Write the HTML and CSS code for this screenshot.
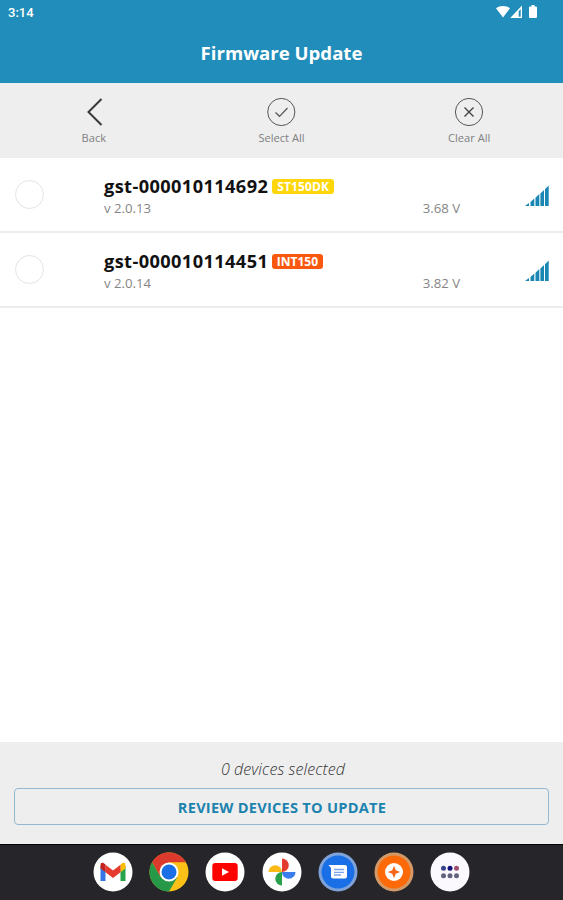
FILE: index.html
```
<!DOCTYPE html>
<html lang="en">
<head>
    <meta charset="UTF-8">
    <meta name="viewport" content="width=device-width, initial-scale=1.0">
    <title>Firmware Update</title>
    <link rel="stylesheet" href="styles.css">
</head>
<body>
    <header>
        <div class="status-bar">
            <span>3:14</span>
            <svg width="42" height="14" viewBox="0 0 42 14" fill="#fff">
                <path d="M0 3.200C4 .1 10 .1 14 3.200L7 12.500z"/>
                <path fill-rule="evenodd" d="M26 .5V13H14.200zM22.700 6.200V11.800H24.700V4z"/>
                <path d="M35.500 0h3v1.400h1.500q1 0 1 1V12q0 1-1 1h-6q-1 0-1-1V2.400q0-1 1-1h1.500z"/>
            </svg>
        </div>
        <h1>Firmware Update</h1>
    </header>

    <nav class="toolbar">
        <div class="tool">
            <svg width="30" height="30" viewBox="0 0 30 30" fill="none" stroke="#383838" stroke-width="2">
                <path d="M22.500 2L9.500 15l13 13"/>
            </svg>
            <span>Back</span>
        </div>
        <div class="tool">
            <svg width="30" height="30" viewBox="0 0 30 30" fill="none" stroke="#555">
                <circle cx="15.300" cy="15" r="13.600"/>
                <path d="M9.500 15.500l4 3.800 8-8.300" stroke-width="1.200"/>
            </svg>
            <span>Select All</span>
        </div>
        <div class="tool">
            <svg width="30" height="30" viewBox="0 0 30 30" fill="none" stroke="#555">
                <circle cx="15" cy="15" r="13.600"/>
                <path d="M10.500 10.500l9 9M19.500 10.500l-9 9" stroke="#444" stroke-width="1.400"/>
            </svg>
            <span>Clear All</span>
        </div>
    </nav>

    <main class="device-list">
        <div class="device">
            <div class="radio"></div>
            <div class="device-info">
                <div class="device-title"><h2>gst-000010114692</h2><span class="badge yellow">ST150DK</span></div>
                <div class="device-meta"><span>v 2.0.13</span><span class="voltage">3.68 V</span></div>
            </div>
            <svg class="signal" width="24" height="22" viewBox="0 0 24 22" fill="#1a86b3">
                <path d="M0 21l4-3v3zM5.500 17l3.800-3.400V21H5.500zM10.500 12.700l3.800-3.600V21h-3.800zM15.400 8.500l3.600-3.500v16h-3.600zM20 4.200L23.700 .5V21H20z"/>
            </svg>
        </div>
        <div class="device">
            <div class="radio"></div>
            <div class="device-info">
                <div class="device-title"><h2>gst-000010114451</h2><span class="badge orange">INT150</span></div>
                <div class="device-meta"><span>v 2.0.14</span><span class="voltage">3.82 V</span></div>
            </div>
            <svg class="signal" width="24" height="22" viewBox="0 0 24 22" fill="#1a86b3">
                <path d="M0 21l4-3v3zM5.500 17l3.800-3.400V21H5.500zM10.500 12.700l3.800-3.600V21h-3.800zM15.400 8.500l3.600-3.500v16h-3.600zM20 4.200L23.700 .5V21H20z"/>
            </svg>
        </div>
    </main>

    <section class="review">
        <p>0 devices selected</p>
        <button>REVIEW DEVICES TO UPDATE</button>
    </section>

    <footer class="dock">
        <!-- mail -->
        <svg viewBox="0 0 40 40">
            <circle cx="20" cy="20" r="19.500" fill="#fff"/>
            <path d="M7.500 14v15h5V17z" fill="#3578e5"/>
            <path d="M27.500 17v12h5V14z" fill="#27a44a"/>
            <path d="M27.500 12.500l2-1.500q3-1 3 2v3.500l-5 3.800z" fill="#fbbc04"/>
            <path d="M12.500 12.800l7.500 5.700 7.500-5.700v7.500L20 26l-7.500-5.700z" fill="#e53b2e"/>
            <path d="M7.500 13q0-3 3-2l2 1.500v7.800l-5-3.800z" fill="#c5221f"/>
        </svg>
        <!-- browser -->
        <svg viewBox="0 0 40 40">
            <circle cx="20" cy="20" r="19.500" fill="#fbc116"/>
            <path d="M3.100 10.250A19.500 19.500 0 0 1 36.900 10.250H20L11.550 24.900z" fill="#db3a2c"/>
            <path d="M3.100 10.250A19.500 19.500 0 0 0 20 39.500L28.450 24.900H11.550z" fill="#279847"/>
            <circle cx="20" cy="20" r="9.500" fill="#fff"/>
            <circle cx="20" cy="20" r="7.500" fill="#1a6fe6"/>
        </svg>
        <!-- video -->
        <svg viewBox="0 0 40 40">
            <circle cx="20" cy="20" r="19.500" fill="#fff"/>
            <rect x="7.300" y="11" width="25.400" height="18" rx="3" fill="#f00"/>
            <path d="M17 16.300v7.400l7-3.700z" fill="#fff"/>
        </svg>
        <!-- photos -->
        <svg viewBox="0 0 40 40">
            <circle cx="20" cy="20" r="19.500" fill="#fff"/>
            <path d="M20 20V6.500a6.750 6.750 0 0 1 0 13.500z" fill="#e33b2e"/>
            <path d="M20 20h13.500a6.750 6.750 0 0 1-13.500 0z" fill="#3b7ded"/>
            <path d="M20 20v13.500a6.750 6.750 0 0 1 0-13.500z" fill="#29a04a"/>
            <path d="M20 20H6.500a6.750 6.750 0 0 1 13.500 0z" fill="#fbb916"/>
        </svg>
        <!-- messages -->
        <svg viewBox="0 0 40 40">
            <circle cx="20" cy="20" r="19.500" fill="#7fa3d8"/>
            <circle cx="20" cy="20" r="16.500" fill="#1a6fe6"/>
            <path d="M10.500 13H27q2 0 2 2v9.500q0 2-2 2H15q-2 0-2-2V16z" fill="#fff"/>
            <path d="M16 17.500h10M16 20.300h10M16 23h7" stroke="#7aa5ea" stroke-width="1.300"/>
        </svg>
        <!-- tools -->
        <svg viewBox="0 0 40 40">
            <circle cx="20" cy="20" r="19.500" fill="#d39a67"/>
            <circle cx="20" cy="20" r="16.500" fill="#ff6a08"/>
            <circle cx="20" cy="20" r="9" fill="#fff"/>
            <path d="M20 13.800l1.800 4.400 4.400 1.800-4.400 1.800L20 26.200l-1.800-4.400-4.400-1.800 4.400-1.800z" fill="#f4661b"/>
        </svg>
        <!-- all apps -->
        <svg viewBox="0 0 40 40">
            <circle cx="20" cy="20" r="19.500" fill="#fbf9fe"/>
            <circle cx="13.500" cy="16.300" r="2.500" fill="#38428c"/>
            <circle cx="20" cy="16.300" r="2.500" fill="#11117a"/>
            <circle cx="26.500" cy="16.300" r="2.500" fill="#a05070"/>
            <circle cx="13.500" cy="23.800" r="2.500" fill="#62627c"/>
            <circle cx="20" cy="23.800" r="2.500" fill="#62627c"/>
            <circle cx="26.500" cy="23.800" r="2.500" fill="#62627c"/>
        </svg>
    </footer>
</body>
</html>
```
FILE: styles.css
```
* {
    box-sizing: border-box;
}

body {
    font-family: "Open Sans", sans-serif;
    background: #fff;
    margin: 0;
    height: 900px;
    display: flex;
    flex-direction: column;
}

header {
    background: #208dba;
    color: #fff;
    height: 83px;
}

.status-bar {
    display: flex;
    justify-content: space-between;
    padding: 5px 25px 0 8px;
    height: 38px;
    font: 500 13px/15px Roboto, sans-serif;
}

h1 {
    margin: 0;
    font-size: 18.6px;
    line-height: 30px;
    font-weight: 700;
    text-align: center;
}

.toolbar {
    display: grid;
    grid-template-columns: repeat(3, 1fr);
    height: 75px;
    padding-top: 14px;
    background: #eee;
}

.tool {
    display: flex;
    flex-direction: column;
    align-items: center;
    font-size: 11.1px;
    line-height: 15px;
    color: #808080;
}

.tool svg {
    margin-bottom: 3px;
}

.device-list {
    flex: 1;
}

.device {
    display: flex;
    height: 75px;
    padding: 0 14px 0 15px;
    border-bottom: 2px solid #ececec;
}

.radio {
    width: 29px;
    height: 29px;
    margin-top: 22px;
    border: 1px solid #e4e4e4;
    border-radius: 50%;
}

.device-info {
    flex: 1;
    margin-left: 60px;
    padding-top: 16px;
}

.device-title {
    display: flex;
    align-items: center;
    gap: 4px;
    height: 25px;
}

h2 {
    margin: 0;
    font-size: 18.2px;
    line-height: 25px;
    font-weight: 700;
    letter-spacing: 0.4px;
    color: #111;
}

.badge {
    height: 15px;
    padding: 0 4.5px;
    border-radius: 3px;
    color: #fff;
    font-size: 12px;
    line-height: 15px;
    font-weight: 700;
}

.yellow {
    padding: 0 5px;
    letter-spacing: 0.1px;
    background: #ffd60a;
}

.orange {
    background: #fa580f;
}

.device-meta {
    display: flex;
    justify-content: space-between;
    font-size: 13.2px;
    line-height: 19px;
    color: #858585;
}

.voltage {
    margin-right: 65px;
}

.signal {
    margin-top: 27px;
}

.review {
    height: 102px;
    padding: 17px 14px 0;
    background: #eee;
}

.review p {
    margin: 0 0 9px;
    font-size: 16px;
    line-height: 20px;
    font-weight: 350;
    font-style: italic;
    letter-spacing: 0.1px;
    padding-left: 3px;
    text-align: center;
    color: #333;
}

.review button {
    display: block;
    width: 100%;
    height: 37px;
    padding: 1px 0 0 1px;
    background: none;
    border: 1px solid #94b8cf;
    border-radius: 4px;
    color: #1c83ae;
    font: 700 14.6px "Open Sans", sans-serif;
    letter-spacing: 0.25px;
}

.dock {
    display: flex;
    justify-content: center;
    align-items: center;
    gap: 16.3px;
    height: 56px;
    padding-bottom: 1px;
    background: #25252a;
    border-top: 1px solid #000;
}

.dock svg {
    width: 40px;
    height: 40px;
}
```
